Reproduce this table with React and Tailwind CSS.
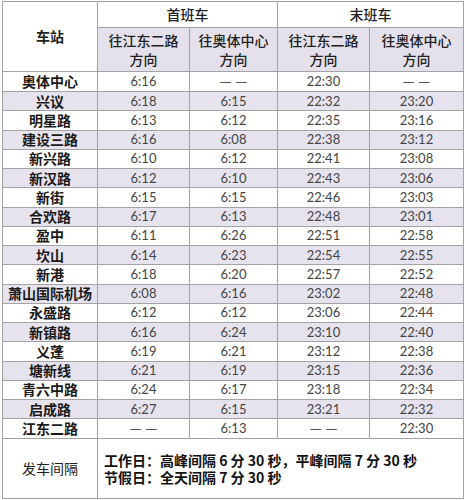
import React from "react";

const rows = [
  ["奥体中心", "6:16", "——", "22:30", "——"],
  ["兴议", "6:18", "6:15", "22:32", "23:20"],
  ["明星路", "6:13", "6:12", "22:35", "23:16"],
  ["建设三路", "6:16", "6:08", "22:38", "23:12"],
  ["新兴路", "6:10", "6:12", "22:41", "23:08"],
  ["新汉路", "6:12", "6:10", "22:43", "23:06"],
  ["新街", "6:15", "6:15", "22:46", "23:03"],
  ["合欢路", "6:17", "6:13", "22:48", "23:01"],
  ["盈中", "6:11", "6:26", "22:51", "22:58"],
  ["坎山", "6:14", "6:23", "22:54", "22:55"],
  ["新港", "6:18", "6:20", "22:57", "22:52"],
  ["萧山国际机场", "6:08", "6:16", "23:02", "22:48"],
  ["永盛路", "6:12", "6:12", "23:06", "22:44"],
  ["新镇路", "6:16", "6:24", "23:10", "22:40"],
  ["义蓬", "6:19", "6:21", "23:12", "22:38"],
  ["塘新线", "6:21", "6:19", "23:15", "22:36"],
  ["青六中路", "6:24", "6:17", "23:18", "22:34"],
  ["启成路", "6:27", "6:15", "23:21", "22:32"],
  ["江东二路", "——", "6:13", "——", "22:30"],
];

const cjk = "font-['Noto_Sans_CJK_SC',sans-serif]";
const num = "font-['Lato','Noto_Sans_CJK_SC',sans-serif]";

function Time({ t }) {
  if (t === "——") {
    return (
      <span className="inline-flex gap-[3px] text-[16px] leading-[17px] text-[#555]">
        <span>—</span>
        <span>—</span>
      </span>
    );
  }
  return t;
}

export default function App() {
  return (
    <div className="w-[465px] h-[500px] bg-white pt-px pl-[2px]">
      <table className={`table-fixed border-collapse w-[461px] text-center ${cjk}`}>
        <colgroup>
          <col className="w-[95px]" />
          <col className="w-[92px]" />
          <col className="w-[88px]" />
          <col className="w-[92px]" />
          <col className="w-[94px]" />
        </colgroup>
        <thead>
          <tr className="h-[26px]">
            <th rowSpan={2} className="border border-[#a3a3a3] text-[14px] font-bold text-[#222]">
              车站
            </th>
            <th colSpan={2} className="border border-[#a3a3a3] text-[14px] font-medium text-[#222]">
              首班车
            </th>
            <th colSpan={2} className="border border-[#a3a3a3] text-[14px] font-medium text-[#222]">
              末班车
            </th>
          </tr>
          <tr className="h-[44px] bg-[#e5e1ec]">
            {[0, 1, 2, 3].map((i) => (
              <th
                key={i}
                className="border border-[#a3a3a3] text-[14px] leading-[19px] font-medium text-[#222] p-0"
              >
                {i % 2 === 0 ? "往江东二路" : "往奥体中心"}
                <br />
                方向
              </th>
            ))}
          </tr>
        </thead>
        <tbody>
          {rows.map((r, idx) => (
            <tr
              key={r[0]}
              className={`h-[19.26px] ${idx % 2 === 1 ? "bg-[#e7e3ee]" : "bg-white"}`}
            >
              <td className="border border-[#a3a3a3] text-[14px] leading-[17px] font-bold text-[#1a1a1a] p-0">
                {r[0]}
              </td>
              {r.slice(1).map((t, j) => (
                <td
                  key={j}
                  className={`border border-[#a3a3a3] text-[13px] leading-[17px] text-[#444] p-0 ${num}`}
                >
                  <Time t={t} />
                </td>
              ))}
            </tr>
          ))}
          <tr className="h-[60px]">
            <td className="border border-[#a3a3a3] text-[14px] text-[#222]">发车间隔</td>
            <td
              colSpan={4}
              className="border border-[#a3a3a3] text-left align-middle pl-[6px] text-[14px] leading-[17px] font-semibold text-[#111]"
            >
              <div>工作日：高峰间隔 6 分 30 秒，平峰间隔 7 分 30 秒</div>
              <div>节假日：全天间隔 7 分 30 秒</div>
            </td>
          </tr>
        </tbody>
      </table>
    </div>
  );
}
